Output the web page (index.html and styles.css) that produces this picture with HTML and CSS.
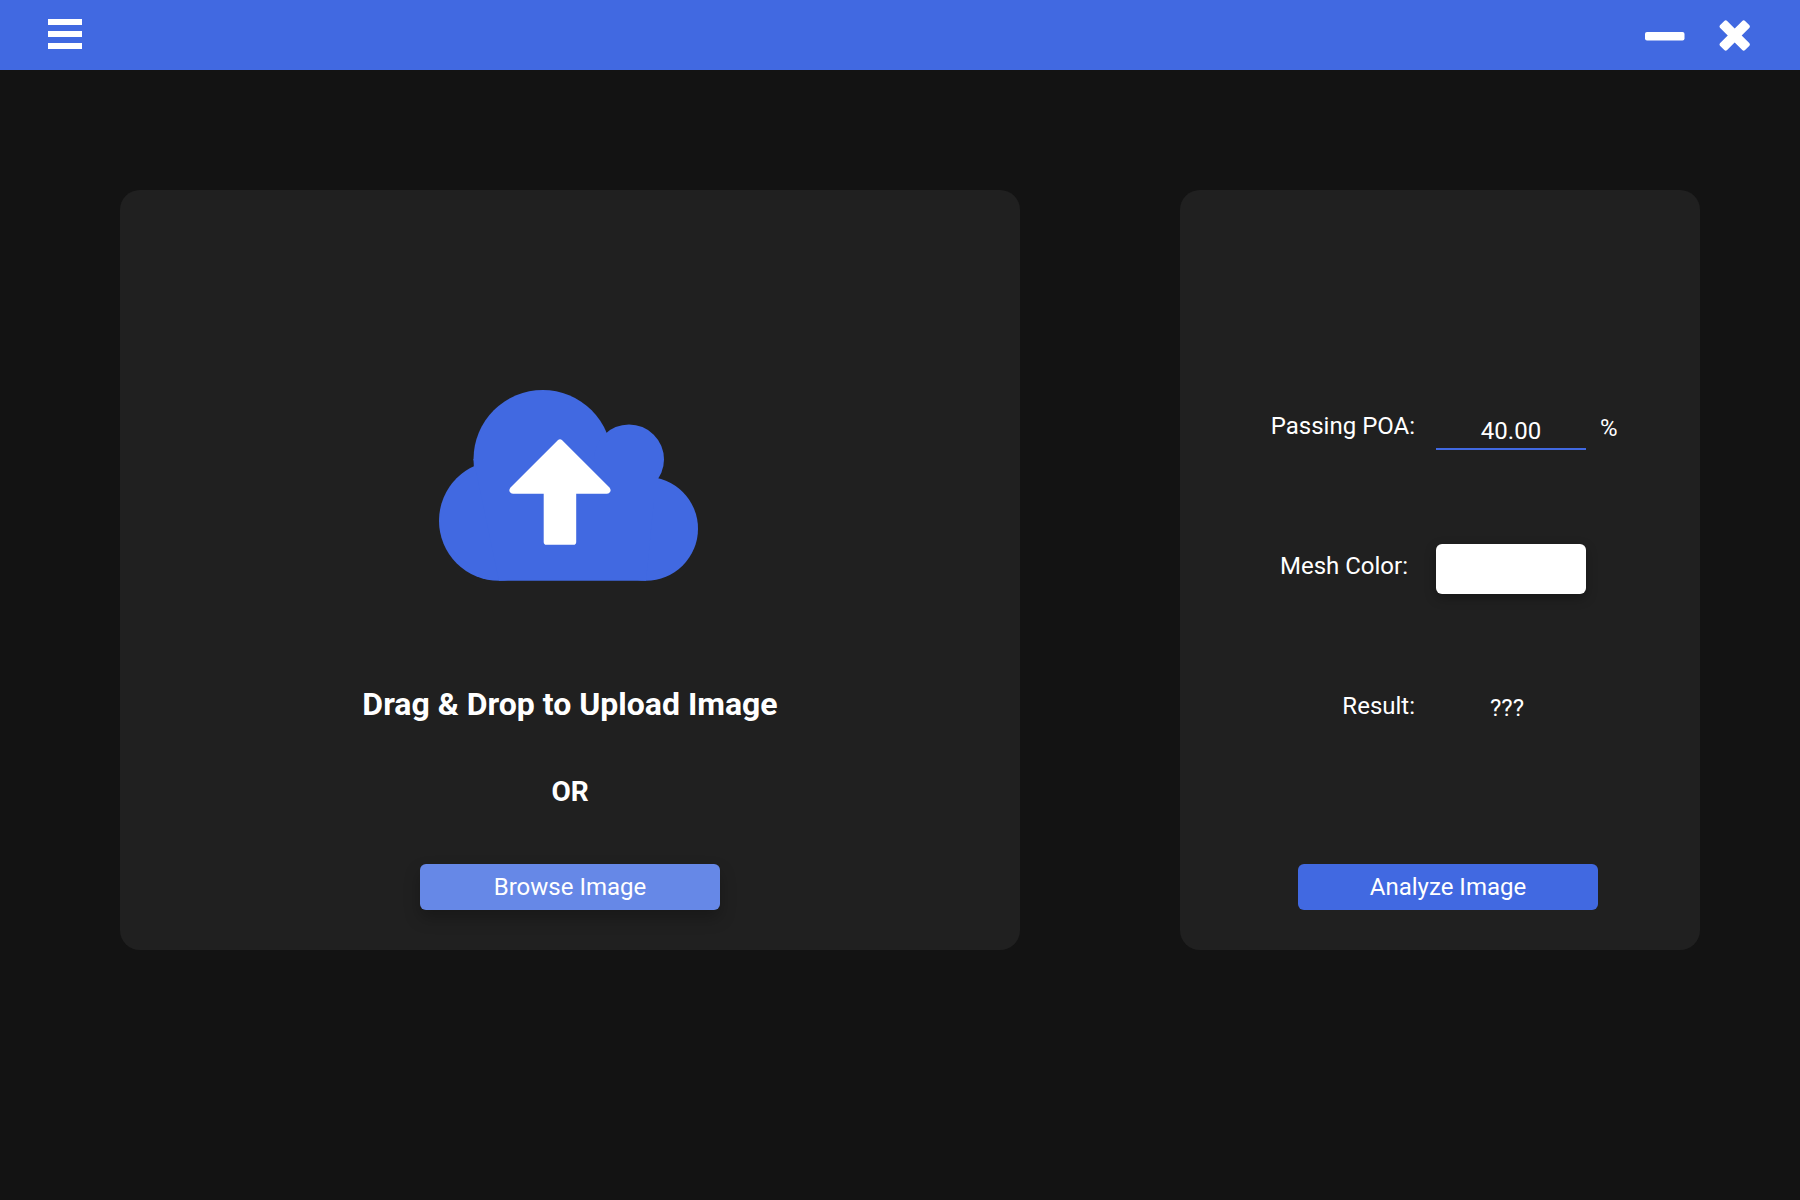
FILE: index.html
```
<!DOCTYPE html>
<html lang="en">
<head>
  <meta charset="utf-8">
  <meta name="viewport" content="width=device-width, initial-scale=1">
  <title>Image Analyzer</title>
  <link rel="stylesheet" href="styles.css">
</head>
<body>
  <header class="titlebar">
    <button class="icon-button" type="button" aria-label="Menu">
      <svg width="34" height="32" viewBox="0 0 34 32" fill="currentColor" aria-hidden="true">
        <path d="M0 0h34v6H0zM0 12h34v6H0zM0 24h34v6H0z"/>
      </svg>
    </button>
    <div class="window-controls">
      <button class="icon-button" type="button" aria-label="Minimize">
        <svg width="40" height="32" viewBox="0 0 40 32" fill="currentColor" aria-hidden="true">
          <rect x="0" y="13" width="39.5" height="8.6" rx="2"/>
        </svg>
      </button>
      <button class="icon-button" type="button" aria-label="Close">
        <svg width="32" height="32" viewBox="0 0 32 32" fill="currentColor" aria-hidden="true">
          <g transform="translate(15.7 16.5) rotate(45)">
            <rect x="-17.6" y="-4.9" width="35.2" height="9.8" rx="2"/>
            <rect x="-4.9" y="-17.6" width="9.8" height="35.2" rx="2"/>
          </g>
        </svg>
      </button>
    </div>
  </header>

  <main class="workspace">
    <section class="card upload">
      <svg class="cloud" width="262" height="192" viewBox="0 0 262 192" aria-hidden="true">
        <g fill="#4169e1">
          <circle cx="103.7" cy="69.2" r="69.2"/>
          <circle cx="190" cy="69.4" r="35"/>
          <circle cx="60" cy="130.7" r="60"/>
          <circle cx="207" cy="138.7" r="52"/>
          <path d="M34.5 69H215v40l-8 81.700H60z"/>
        </g>
        <path fill="#fff" d="M118.800 50.200q2.200-2 4.400 0L170.500 97.500q1.800 2.300 .7 4.300-1 2-3.200 2H137.200v48.100q0 2.800-2.800 2.800h-26.900q-2.800 0-2.800-2.800V103.800H74q-2.200 0-3.300-2-1-2 .8-4.300z"/>
      </svg>
      <h1 class="upload-title">Drag &amp; Drop to Upload Image</h1>
      <p class="upload-or">OR</p>
      <button class="button button-hover" type="button">Browse Image</button>
    </section>

    <section class="card analysis">
      <form class="settings">
        <label class="label" for="poa">Passing POA:</label>
        <input class="number" id="poa" type="text" inputmode="decimal" value="40.00">
        <span class="value">%</span>

        <label class="label label-mesh" for="mesh">Mesh Color:</label>
        <button class="swatch" id="mesh" type="button"></button>
        <span></span>

        <label class="label" for="result">Result:</label>
        <output class="value result" id="result">???</output>
        <span></span>
      </form>
      <button class="button" type="button">Analyze Image</button>
    </section>
  </main>
</body>
</html>
```
FILE: styles.css
```
* {
  box-sizing: border-box;
}

body {
  margin: 0;
  min-height: 100vh;
  background: #131313;
  color: #fff;
  font-family: Roboto, "Liberation Sans", sans-serif;
  font-size: 24px;
}

button,
input {
  border: 0;
  padding: 0;
  color: inherit;
  font: inherit;
}

button {
  cursor: pointer;
}

.titlebar {
  display: flex;
  align-items: center;
  justify-content: space-between;
  height: 70px;
  padding: 0 49px 0 48px;
  background: #4169e1;
}

.window-controls {
  display: flex;
  gap: 34px;
}

.icon-button {
  display: flex;
  background: none;
}

.workspace {
  display: grid;
  grid-template-columns: 45fr 26fr;
  gap: 160px;
  padding: 120px 100px 120px 120px;
}

.card {
  display: flex;
  flex-direction: column;
  align-items: center;
  border-radius: 20px;
  background: #202020;
}

.upload {
  padding: 200px 40px 40px;
}

.upload-title {
  margin: 102px 0 0;
  font-size: 32px;
  line-height: 40px;
}

.upload-or {
  margin: 50px 0 54px;
  font-size: 28px;
  font-weight: 700;
  line-height: 36px;
}

.button {
  width: 300px;
  height: 46px;
  border-radius: 6px;
  background: #4169e1;
}

.button-hover {
  background: #6688e7;
  box-shadow: 0 8px 16px rgba(0, 0, 0, 0.25);
}

.analysis {
  justify-content: space-between;
  padding: 214px 32px 40px 48px;
}

.settings {
  display: grid;
  grid-template-columns: 156px 150px 30px;
  grid-auto-rows: 50px;
  column-gap: 14px;
  row-gap: 90px;
  align-items: start;
}

.label {
  padding-right: 7px;
  line-height: 44px;
  text-align: right;
  white-space: nowrap;
}

.label-mesh {
  padding-right: 14px;
}

.number {
  width: 100%;
  height: 46px;
  padding-top: 10px;
  border-bottom: 2px solid #4169e1;
  background: transparent;
  text-align: center;
  outline: 0;
}

.value {
  line-height: 48px;
}

.result {
  padding-right: 8px;
  text-align: center;
}

.swatch {
  height: 50px;
  border-radius: 6px;
  background: #fff;
  box-shadow: 0 4px 12px rgba(0, 0, 0, 0.3);
}
```
